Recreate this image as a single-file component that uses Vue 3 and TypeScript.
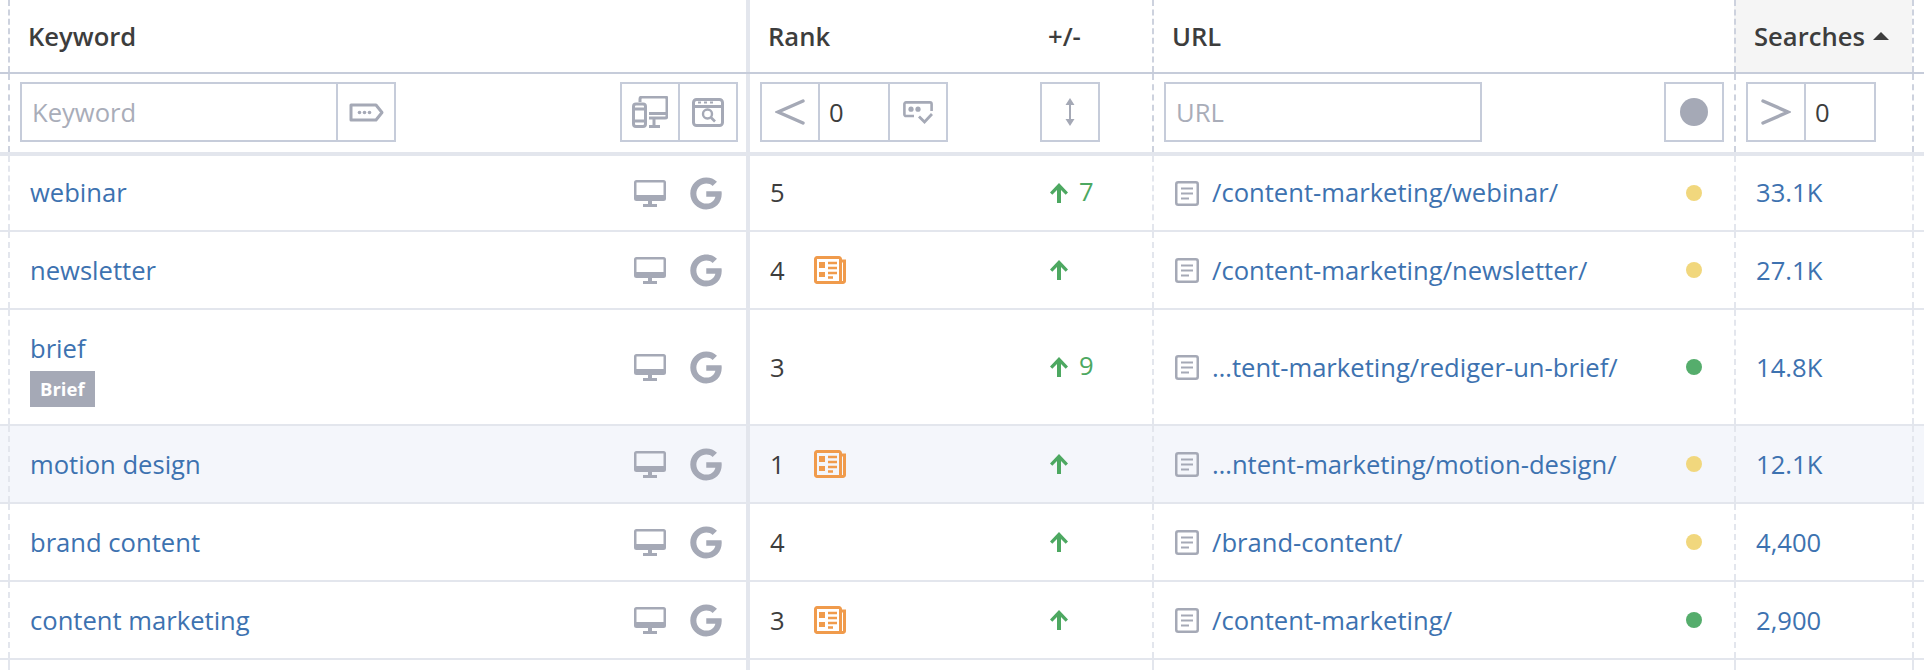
<script setup lang="ts">
interface Row {
  keyword: string
  tag?: string
  rank: number
  news: boolean
  change?: number
  url: string
  status: 'yellow' | 'green'
  searches: string
  hover?: boolean
}

const rows: Row[] = [
  { keyword: 'webinar', rank: 5, news: false, change: 7, url: '/content-marketing/webinar/', status: 'yellow', searches: '33.1K' },
  { keyword: 'newsletter', rank: 4, news: true, url: '/content-marketing/newsletter/', status: 'yellow', searches: '27.1K' },
  { keyword: 'brief', tag: 'Brief', rank: 3, news: false, change: 9, url: '…tent-marketing/rediger-un-brief/', status: 'green', searches: '14.8K' },
  { keyword: 'motion design', rank: 1, news: true, url: '…ntent-marketing/motion-design/', status: 'yellow', searches: '12.1K', hover: true },
  { keyword: 'brand content', rank: 4, news: false, url: '/brand-content/', status: 'yellow', searches: '4,400' },
  { keyword: 'content marketing', rank: 3, news: true, url: '/content-marketing/', status: 'green', searches: '2,900' },
]
</script>

<template>
  <div class="table">
    <div class="grid head">
      <div class="edge"></div>
      <div class="c kw">Keyword</div>
      <div class="c rank">Rank</div>
      <div class="c chg">+/-</div>
      <div class="c url">URL</div>
      <div class="c srch sorted">Searches<span class="caret"></span></div>
      <div class="c end"></div>
    </div>

    <div class="grid filters">
      <div class="edge"></div>
      <div class="c kw between">
        <div class="box">
          <input class="field kw-field" placeholder="Keyword" />
          <button class="cell w58">
            <svg width="35" height="19" viewBox="0 0 35 19" fill="none">
              <path d="M2 2h25l6 7.500-6 7.500H2z" stroke="#a5a9b6" stroke-width="3" stroke-linejoin="round" />
              <circle cx="10.500" cy="9.500" r="1.800" fill="#a5a9b6" />
              <circle cx="15.500" cy="9.500" r="1.800" fill="#a5a9b6" />
              <circle cx="20.500" cy="9.500" r="1.800" fill="#a5a9b6" />
            </svg>
          </button>
        </div>
        <div class="box">
          <button class="cell first w56">
            <svg width="36" height="32" viewBox="0 0 36 32" fill="none" stroke="#a5a9b6" stroke-width="3">
              <path d="M8 6V3a2 2 0 0 1 2-2h23a2 2 0 0 1 2 2v17a2 2 0 0 1-2 2H17" />
              <rect x="1.500" y="8" width="12" height="22.500" rx="2.500" />
              <path d="M1.500 13h12M1.500 25h12M17 17.500h18M22 22v8M17 30.500h11" />
            </svg>
          </button>
          <button class="cell w58">
            <svg width="32" height="29" viewBox="0 0 32 29" fill="none" stroke="#a5a9b6" stroke-width="3">
              <rect x="1.500" y="1.500" width="29" height="26" rx="3" />
              <path d="M1.500 8.500h29" />
              <path d="M6 4.500h3M12 4.500h3M18 4.500h3" stroke-width="2" />
              <circle cx="15.500" cy="16" r="4.500" stroke-width="2.400" />
              <path d="M19 19.500l4 4" stroke-width="2.600" />
            </svg>
          </button>
        </div>
      </div>
      <div class="c rank">
        <div class="box">
          <button class="cell first w56">
            <svg width="30" height="26" viewBox="0 0 30 26" fill="none">
              <path d="M28 2L3 13l25 11" stroke="#a5a9b6" stroke-width="3.400" stroke-linecap="round" />
            </svg>
          </button>
          <span class="value rank-value">0</span>
          <button class="cell w58">
            <svg width="30" height="23" viewBox="0 0 30 23" fill="none" stroke="#a5a9b6" stroke-width="2.600">
              <path d="M11 15H3a1.600 1.600 0 0 1-1.600-1.600V3A1.600 1.600 0 0 1 3 1.400h24A1.600 1.600 0 0 1 28.600 3v7" />
              <circle cx="8" cy="8.200" r="2.600" fill="#a5a9b6" stroke="none" />
              <circle cx="15" cy="8.200" r="2.600" fill="#a5a9b6" stroke="none" />
              <path d="M16 15.500l5.500 5.500 7.500-8" stroke-width="2.800" />
            </svg>
          </button>
        </div>
      </div>
      <div class="c chg">
        <div class="box">
          <button class="cell first w56">
            <svg width="10" height="28" viewBox="0 0 10 28" fill="#a5a9b6">
              <path d="M5 0l4.500 7H6v14h3.500L5 28 .5 21H4V7H.5z" />
            </svg>
          </button>
        </div>
      </div>
      <div class="c url between">
        <div class="box"><input class="field url-field" placeholder="URL" /></div>
        <div class="box">
          <button class="cell first w56"><span class="big-dot"></span></button>
        </div>
      </div>
      <div class="c srch">
        <div class="box">
          <button class="cell first w56">
            <svg width="30" height="26" viewBox="0 0 30 26" fill="none">
              <path d="M2 2l25 11L2 24" stroke="#a5a9b6" stroke-width="3.400" stroke-linecap="round" />
            </svg>
          </button>
          <span class="value srch-value">0</span>
        </div>
      </div>
      <div class="c end"></div>
    </div>

    <div v-for="r in rows" :key="r.keyword" class="grid row" :class="{ hover: r.hover, tall: r.tag }">
      <div class="edge"></div>
      <div class="c kw between">
        <div class="kw-text">
          <a class="link">{{ r.keyword }}</a>
          <span v-if="r.tag" class="tag">{{ r.tag }}</span>
        </div>
        <div class="kw-icons">
          <svg width="32" height="27" viewBox="0 0 32 27" fill="#a5a9b6">
            <path fill-rule="evenodd" d="M2.500 0h27A2.500 2.500 0 0 1 32 2.500v16a2.500 2.500 0 0 1-2.500 2.500h-27A2.500 2.500 0 0 1 0 18.500v-16A2.500 2.500 0 0 1 2.500 0zM2.500 2.500v12.500h27V2.500z" />
            <path d="M14 21h4v3h5v3H9v-3h5z" />
          </svg>
          <svg width="32" height="33" viewBox="0 0 488 512" fill="#a5a9b6">
            <path d="M488 261.800C488 403.300 391.100 504 248 504 110.800 504 0 393.200 0 256S110.800 8 248 8c66.800 0 123 24.500 166.300 64.900l-67.500 64.900C258.500 52.600 94.300 116.600 94.300 256c0 86.500 69.100 156.600 153.700 156.600 98.200 0 135-70.400 140.800-106.900H248v-85.300h236.100c2.300 12.700 3.900 24.900 3.900 41.400z" />
          </svg>
        </div>
      </div>
      <div class="c rank">
        <span class="num">{{ r.rank }}</span>
        <svg v-if="r.news" width="32" height="28" viewBox="0 0 32 28" fill="none" stroke="#f09b4c">
          <path d="M1.500 3A1.500 1.500 0 0 1 3 1.500h22A1.500 1.500 0 0 1 26.500 3v23.500H3A1.500 1.500 0 0 1 1.500 25z" stroke-width="3" />
          <path d="M26.500 5h4v20a1.500 1.500 0 0 1-1.500 1.500h-3" stroke-width="3" />
          <path d="M5 6h6v6H5zM5 16h6v5H5z" fill="#f09b4c" stroke="none" />
          <path d="M14 7h9M14 12h9M14 17h9M14 21.500h5" stroke-width="2.400" />
        </svg>
      </div>
      <div class="c chg green">
        <svg width="18" height="20" viewBox="0 0 18 20" fill="#4da861">
          <path d="M9 0l9 9.500-2.300 2.200L11 7v13H7V7l-4.700 4.700L0 9.500z" />
        </svg>
        <span v-if="r.change" class="delta">{{ r.change }}</span>
      </div>
      <div class="c url between">
        <div class="url-text">
          <svg width="24" height="25" viewBox="0 0 24 25" fill="none" stroke="#a5a9b6">
            <rect x="1.250" y="1.250" width="21.500" height="22.500" rx="2" stroke-width="2.500" />
            <path d="M6 7.500h12M6 12.500h12M6 17.500h8" stroke-width="2" />
          </svg>
          <a class="link">{{ r.url }}</a>
        </div>
        <span class="dot" :class="r.status"></span>
      </div>
      <div class="c srch"><a class="link">{{ r.searches }}</a></div>
      <div class="c end"></div>
    </div>

    <div class="grid tail">
      <div class="edge"></div>
      <div class="c kw"></div>
      <div class="c rank"></div>
      <div class="c chg"></div>
      <div class="c url"></div>
      <div class="c srch"></div>
      <div class="c end"></div>
    </div>
  </div>
</template>

<style>
html,
body {
  margin: 0;
  background: #fff;
  overflow: hidden;
}
</style>

<style scoped>
.table {
  width: 1924px;
  font-family: "Open Sans", "Noto Sans", sans-serif;
  font-size: 25.6px;
  color: #3d3d3d;
}
.grid {
  display: grid;
  grid-template-columns: 8px 738px 294px 112px 582px 178px 12px;
  box-sizing: border-box;
}
.c {
  display: flex;
  align-items: center;
  box-sizing: border-box;
  min-width: 0;
}
.kw {
  border-left: 2px dashed #e3e6ed;
  padding: 0 24px 0 20px;
}
.rank {
  border-left: 4px solid #e3e6ed;
  padding-left: 20px;
}
.chg {
  padding-left: 10px;
}
.url {
  border-left: 2px dashed #e3e6ed;
  padding: 0 32px 0 21px;
}
.srch {
  border-left: 2px dashed #e3e6ed;
  padding-left: 20px;
}
.end {
  border-left: 2px dashed #e3e6ed;
}
.between {
  justify-content: space-between;
}

.head {
  height: 74px;
  border-bottom: 2px solid #c6ccda;
  font-weight: 600;
}
.head .kw,
.head .url,
.head .srch,
.head .end {
  border-left-color: #cdd2de;
}
.head .kw {
  padding-left: 18px;
}
.head .rank {
  padding-left: 18px;
}
.head .chg {
  padding-left: 8px;
}
.head .url {
  padding-left: 18px;
}
.head .srch {
  padding-left: 18px;
}
.sorted {
  background: #f5f5f5;
}
.caret {
  margin-left: 8px;
  width: 0;
  height: 0;
  border-left: 8px solid transparent;
  border-right: 8px solid transparent;
  border-bottom: 8px solid #3d3d3d;
}

.filters {
  height: 82px;
  border-bottom: 4px solid #e3e6ed;
}
.filters .c {
  align-items: flex-start;
  padding: 8px 10px 0;
}
.filters .kw,
.filters .url,
.filters .srch,
.filters .end {
  border-left-color: #cdd2de;
}
.filters .kw {
  padding-right: 8px;
}
.filters .chg {
  padding-left: 0;
}
.filters .end {
  padding: 0;
}
.box {
  display: flex;
  height: 60px;
  box-sizing: border-box;
  border: 2px solid #c6ccda;
  background: #fff;
}
.cell {
  display: flex;
  align-items: center;
  justify-content: center;
  box-sizing: border-box;
  height: 100%;
  padding: 0;
  background: none;
  border: 0;
  border-left: 2px solid #c6ccda;
}
.first {
  border-left: 0;
}
.w56 {
  width: 56px;
}
.w58 {
  width: 58px;
}
.field {
  box-sizing: border-box;
  height: 100%;
  padding: 0 0 0 10px;
  border: 0;
  outline: 0;
  background: none;
  font: inherit;
  color: #3d3d3d;
}
.field::placeholder {
  color: #a9adb9;
  opacity: 1;
}
.kw-field {
  width: 314px;
}
.url-field {
  width: 314px;
}
.value {
  display: flex;
  align-items: center;
  box-sizing: border-box;
  height: 100%;
  padding-left: 9px;
  border-left: 2px solid #c6ccda;
}
.rank-value {
  width: 70px;
}
.srch-value {
  width: 70px;
}
.big-dot {
  width: 28px;
  height: 28px;
  border-radius: 50%;
  background: #a5a9b6;
}

.row {
  height: 78px;
  border-bottom: 2px solid #e3e6ed;
}
.row:nth-child(3) {
  height: 76px;
}
.row:nth-child(3) .link,
.row:nth-child(3) .num {
  margin-bottom: 2px;
}
.row.tall {
  height: 116px;
}
.row.tall .kw-text {
  padding-top: 4px;
}
.row.hover {
  background: #f4f6fb;
}
.kw-text {
  display: flex;
  flex-direction: column;
  align-items: flex-start;
}
.link {
  color: #3d72b0;
  white-space: nowrap;
}
.tag {
  margin-top: 5px;
  padding: 0 10px;
  height: 36px;
  line-height: 36px;
  background: #a5a9b6;
  color: #fff;
  font-size: 18.500px;
  font-weight: 700;
}
.kw-icons {
  display: flex;
  align-items: center;
  gap: 24px;
}
.num {
  width: 44px;
}
.green {
  color: #4da861;
}
.delta {
  margin-left: 11px;
  margin-bottom: 3px;
}
.url-text {
  display: flex;
  align-items: center;
  gap: 13px;
}
.dot {
  width: 16px;
  height: 16px;
  border-radius: 50%;
}
.dot.yellow {
  background: #f1d77d;
}
.dot.green {
  background: #55ad6c;
}
.tail {
  height: 12px;
}
</style>
